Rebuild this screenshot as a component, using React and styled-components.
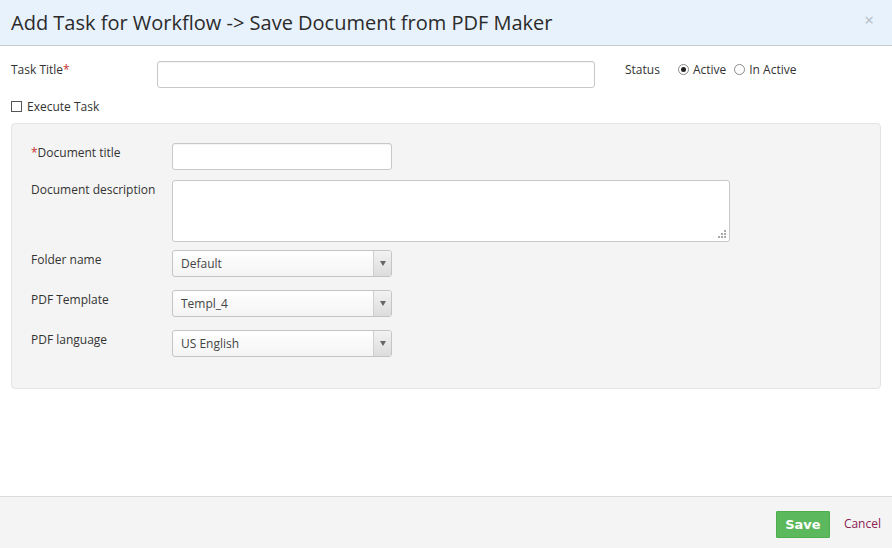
import React from "react";
import styled, { createGlobalStyle } from "styled-components";

const GlobalStyle = createGlobalStyle`
  html, body { margin: 0; padding: 0; background: #fff; }
  body { font-family: "Open Sans", "Liberation Sans", sans-serif; color: #333; }
  * { box-sizing: border-box; }
`;

const Modal = styled.div`
  width: 892px;
  height: 548px;
  display: flex;
  flex-direction: column;
  background: #fff;
`;

const Header = styled.div`
  height: 46px;
  flex: none;
  background: #e8f2fc;
  border-bottom: 1px solid #c9cdd1;
  display: flex;
  align-items: center;
  justify-content: space-between;
  padding: 0 18px 0 11px;
`;

const Title = styled.h3`
  margin: 0;
  font-family: "Open Sans", sans-serif;
  font-weight: 400;
  font-size: 20px;
  color: #2b2b2b;
`;

const Close = styled.span`
  font-size: 17px;
  color: #b5bcc4;
  line-height: 1;
  margin-top: -6px;
`;

const Body = styled.div`
  flex: 1;
  padding: 15px 11px 0 11px;
`;

const TopRow = styled.div`
  display: flex;
  align-items: flex-start;
  height: 28px;
`;

const TopLabel = styled.label`
  width: 146px;
  font-size: 12px;
  padding-top: 0;
`;

const Req = styled.span`
  color: #c9302c;
`;

const TextInput = styled.input`
  width: ${(p) => p.$w}px;
  height: 27px;
  border: 1px solid #c8c8c8;
  border-radius: 3px;
  background: #fff;
  padding: 0 8px;
  font: inherit;
  font-size: 12px;
  box-shadow: inset 0 1px 1px rgba(0, 0, 0, 0.05);
  outline: none;
`;

const Status = styled.div`
  display: flex;
  align-items: center;
  margin-left: 30px;
  font-size: 12px;
  padding-top: 0;
`;

const StatusLabel = styled.span`
  margin-right: 18px;
`;

const RadioOpt = styled.span`
  display: inline-flex;
  align-items: center;
  margin-right: 8px;
`;

const RadioDot = styled.span`
  width: 11px;
  height: 11px;
  border-radius: 50%;
  border: 1px solid #8a8a8a;
  background: #fff;
  margin-right: 4px;
  display: inline-flex;
  align-items: center;
  justify-content: center;
  &::after {
    content: "";
    width: 5px;
    height: 5px;
    border-radius: 50%;
    background: ${(p) => (p.$on ? "#222" : "transparent")};
  }
`;

const CheckRow = styled.div`
  display: flex;
  align-items: center;
  margin-top: 9px;
  font-size: 12px;
`;

const CheckBox = styled.span`
  width: 11px;
  height: 11px;
  border: 1px solid #555;
  background: #fff;
  margin-right: 5px;
`;

const Panel = styled.div`
  margin-top: 8px;
  height: 266px;
  background: #f4f4f4;
  border: 1px solid #e4e4e4;
  border-radius: 4px;
  padding: 19px 19px;
  display: flex;
  flex-direction: column;
`;

const FieldRow = styled.div`
  display: flex;
  align-items: flex-start;
  margin-bottom: ${(p) => p.$mb ?? 10}px;
`;

const FieldLabel = styled.label`
  width: 141px;
  font-size: 12px;
  padding-top: 1px;
`;

const Area = styled.div`
  position: relative;
  width: 558px;
  height: 62px;
  background: #fff;
  border: 1px solid #c8c8c8;
  border-radius: 3px;
`;

const Grip = styled.svg`
  position: absolute;
  right: 2px;
  bottom: 2px;
`;

const Select = styled.div`
  width: 220px;
  height: 27px;
  display: flex;
  border: 1px solid #c4c4c4;
  border-radius: 3px;
  background: linear-gradient(#ffffff, #f4f4f4);
  overflow: hidden;
  font-size: 12px;
`;

const SelectText = styled.span`
  flex: 1;
  display: flex;
  align-items: center;
  padding: 0 8px;
  color: #444;
`;

const SelectArrow = styled.span`
  width: 18px;
  border-left: 1px solid #d0d0d0;
  background: linear-gradient(#f2f2f2, #dcdcdc);
  display: flex;
  align-items: center;
  justify-content: center;
  &::after {
    content: "";
    border-left: 3px solid transparent;
    border-right: 3px solid transparent;
    border-top: 5px solid #666;
  }
`;

const Footer = styled.div`
  height: 52px;
  flex: none;
  background: #f4f4f4;
  border-top: 1px solid #dcdcdc;
  display: flex;
  align-items: center;
  justify-content: flex-end;
  padding: 0 11px 0 0;
  gap: 14px;
`;

const SaveBtn = styled.button`
  width: 54px;
  height: 27px;
  margin-top: 4px;
  background: #5cb85c;
  border: 1px solid #4cae4c;
  color: #fff;
  font-family: "DejaVu Sans", Verdana, sans-serif;
  font-weight: 700;
  font-size: 13px;
  border-radius: 1px;
  padding: 0;
`;

const Cancel = styled.a`
  font-size: 12px;
  color: #8b2252;
  text-decoration: none;
  margin-top: 1px;
`;

const selects = [
  { label: "Folder name", value: "Default" },
  { label: "PDF Template", value: "Templ_4" },
  { label: "PDF language", value: "US English" },
];

const gripDots = [
  [8, 2],
  [5, 5],
  [8, 5],
  [2, 8],
  [5, 8],
  [8, 8],
];

export default function App() {
  return (
    <Modal>
      <GlobalStyle />
      <Header>
        <Title>Add Task for Workflow -&gt; Save Document from PDF Maker</Title>
        <Close>×</Close>
      </Header>
      <Body>
        <TopRow>
          <TopLabel>
            Task Title<Req>*</Req>
          </TopLabel>
          <TextInput $w={438} />
          <Status>
            <StatusLabel>Status</StatusLabel>
            <RadioOpt>
              <RadioDot $on />
              Active
            </RadioOpt>
            <RadioOpt>
              <RadioDot />
              In Active
            </RadioOpt>
          </Status>
        </TopRow>
        <CheckRow>
          <CheckBox />
          Execute Task
        </CheckRow>
        <Panel>
          <FieldRow>
            <FieldLabel>
              <Req>*</Req>Document title
            </FieldLabel>
            <TextInput $w={220} />
          </FieldRow>
          <FieldRow $mb={8}>
            <FieldLabel>Document description</FieldLabel>
            <Area>
              <Grip width="10" height="10" viewBox="0 0 10 10">
                {gripDots.map(([x, y], i) => (
                  <rect key={i} x={x - 1} y={y - 1} width="2" height="2" fill="#aaa" />
                ))}
              </Grip>
            </Area>
          </FieldRow>
          {selects.map((s) => (
            <FieldRow key={s.label} $mb={13}>
              <FieldLabel>{s.label}</FieldLabel>
              <Select>
                <SelectText>{s.value}</SelectText>
                <SelectArrow />
              </Select>
            </FieldRow>
          ))}
        </Panel>
      </Body>
      <Footer>
        <SaveBtn>Save</SaveBtn>
        <Cancel>Cancel</Cancel>
      </Footer>
    </Modal>
  );
}
